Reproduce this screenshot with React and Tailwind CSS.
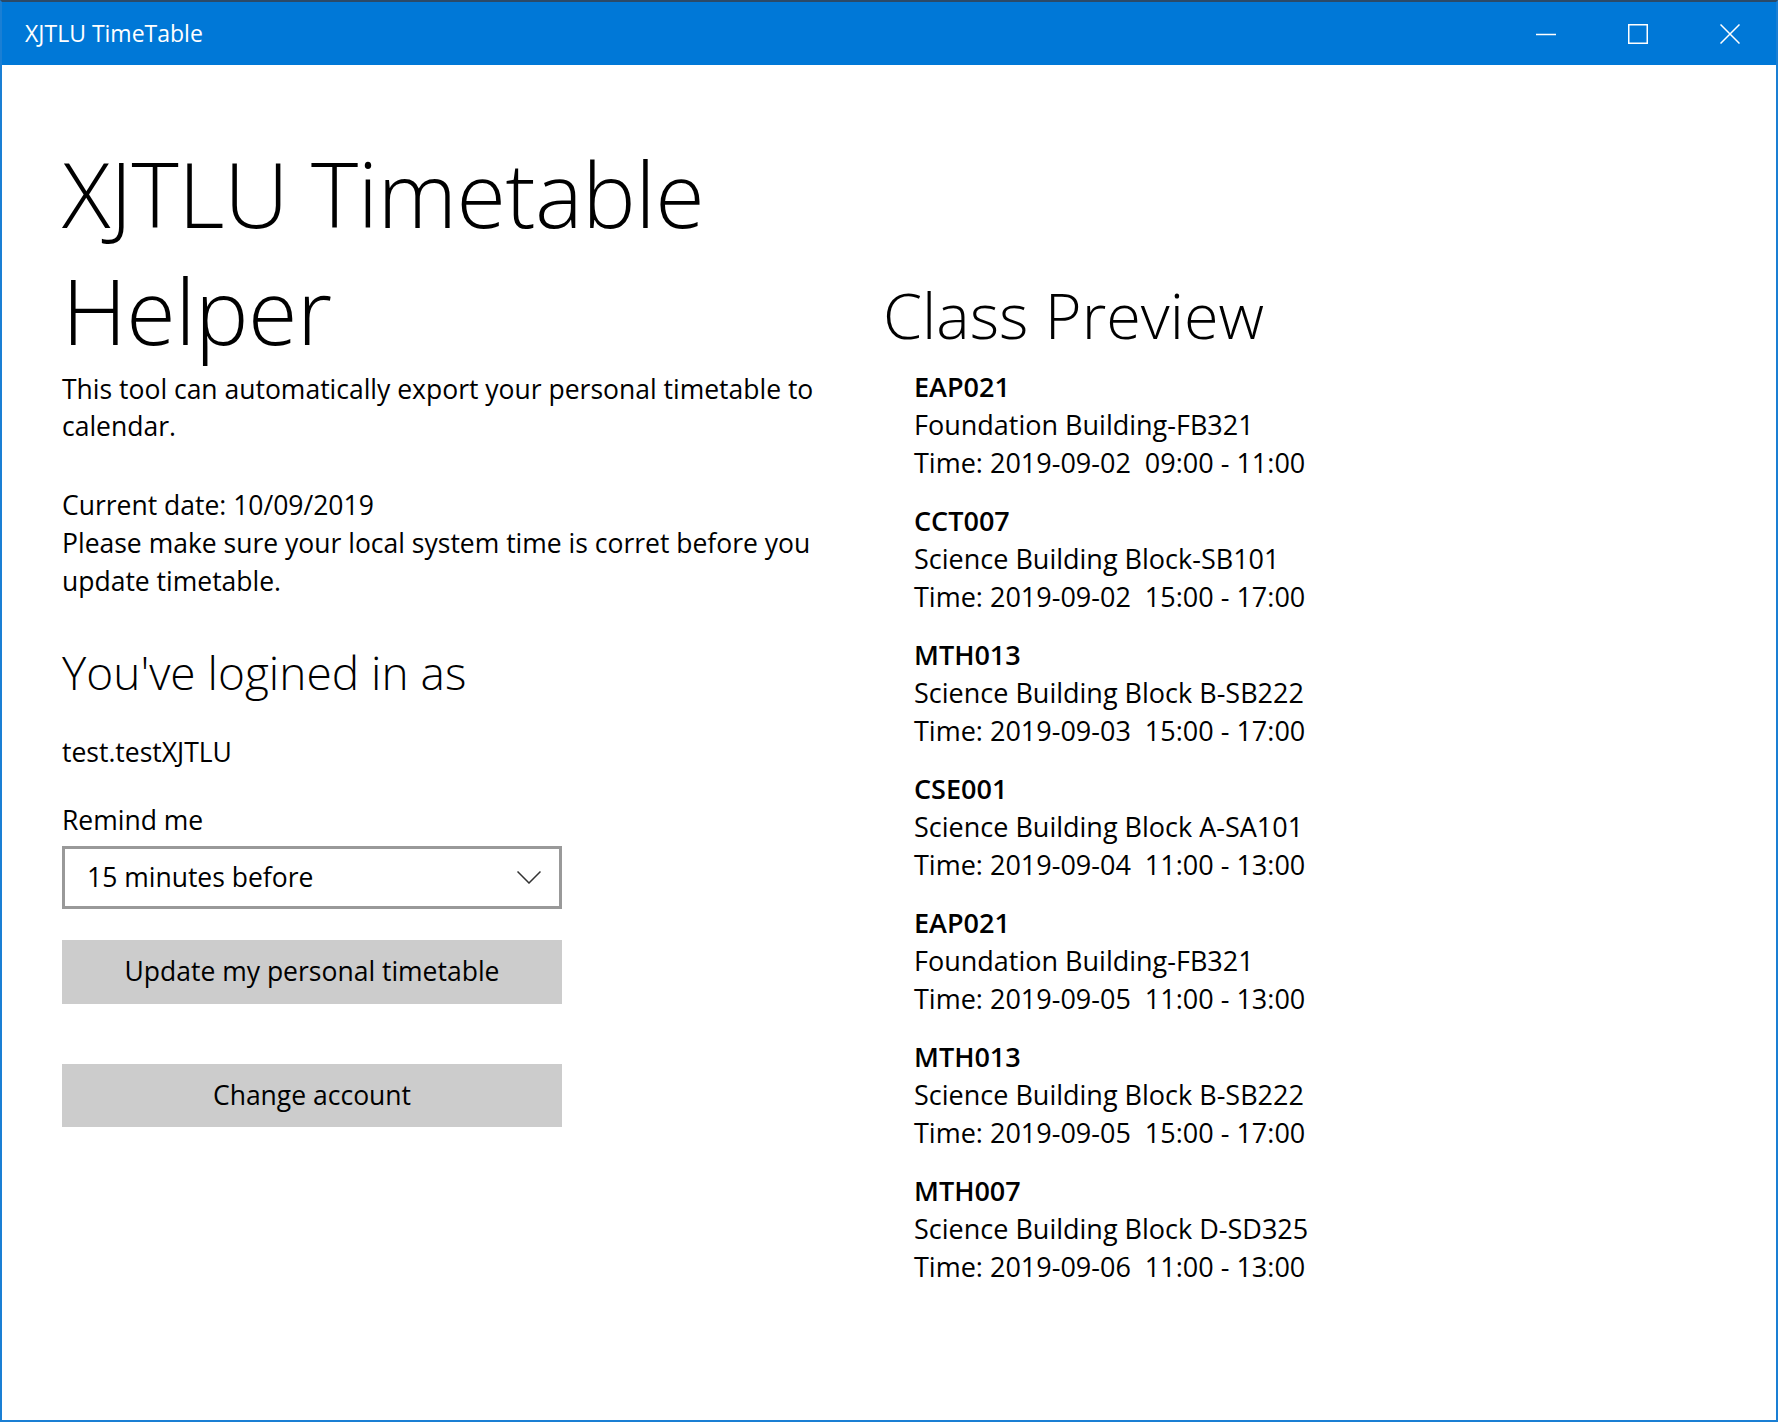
import React from 'react';

const classes = [
  { code: 'EAP021', room: 'Foundation Building-FB321', time: 'Time: 2019-09-02\u00a0\u00a009:00 - 11:00' },
  { code: 'CCT007', room: 'Science Building Block-SB101', time: 'Time: 2019-09-02\u00a0\u00a015:00 - 17:00' },
  { code: 'MTH013', room: 'Science Building Block B-SB222', time: 'Time: 2019-09-03\u00a0\u00a015:00 - 17:00' },
  { code: 'CSE001', room: 'Science Building Block A-SA101', time: 'Time: 2019-09-04\u00a0\u00a011:00 - 13:00' },
  { code: 'EAP021', room: 'Foundation Building-FB321', time: 'Time: 2019-09-05\u00a0\u00a011:00 - 13:00' },
  { code: 'MTH013', room: 'Science Building Block B-SB222', time: 'Time: 2019-09-05\u00a0\u00a015:00 - 17:00' },
  { code: 'MTH007', room: 'Science Building Block D-SD325', time: 'Time: 2019-09-06\u00a0\u00a011:00 - 13:00' },
];

function TitleBar() {
  return (
    <div className="h-[63px] bg-[#0078d7] flex items-center text-white shrink-0">
      <div className="pl-[23px] text-[23px] flex-1">XJTLU TimeTable</div>
      <div className="flex h-full">
        <div className="w-[92px] h-full flex items-center justify-center">
          <svg width="20" height="20" viewBox="0 0 20 20">
            <line x1="0" y1="10.5" x2="20" y2="10.5" stroke="white" strokeWidth="1.5" />
          </svg>
        </div>
        <div className="w-[92px] h-full flex items-center justify-center">
          <svg width="20" height="20" viewBox="0 0 20 20">
            <rect x="0.75" y="0.75" width="18.5" height="18.5" fill="none" stroke="white" strokeWidth="1.5" />
          </svg>
        </div>
        <div className="w-[92px] h-full flex items-center justify-center">
          <svg width="20" height="20" viewBox="0 0 20 20">
            <path d="M0.5 0.5 L19.5 19.5 M19.5 0.5 L0.5 19.5" stroke="white" strokeWidth="1.5" />
          </svg>
        </div>
      </div>
    </div>
  );
}

export default function App() {
  return (
    <div
      className="w-[1778px] h-[1422px] flex flex-col bg-white border-x-2 border-b-2 border-[#1a7fd4] border-t-2 border-t-[#2b4a68] text-black overflow-hidden"
      style={{ fontFamily: "'Open Sans', 'Noto Sans', sans-serif" }}
    >
      <TitleBar />
      <div className="flex flex-1">
        <div className="w-[881px] pl-[60px] shrink-0">
          <h1 className="mt-[70px] text-[90px] leading-[117px] font-light tracking-[-0.5px] whitespace-nowrap">
            XJTLU Timetable
            <br />
            Helper
          </h1>
          <p className="mt-[2px] text-[26.5px] leading-[37px] whitespace-nowrap">
            This tool can automatically export your personal timetable to
            <br />
            calendar.
          </p>
          <p className="mt-[41px] text-[26.5px] leading-[38px] whitespace-nowrap">
            Current date: 10/09/2019
            <br />
            Please make sure your local system time is corret before you
            <br />
            update timetable.
          </p>
          <h2 className="mt-[42px] text-[46px] leading-[60px] font-light">You've logined in as</h2>
          <div className="mt-[31px] text-[26.5px] leading-[38px]">test.testXJTLU</div>
          <div className="mt-[30px] text-[26.5px] leading-[38px]">Remind me</div>
          <div className="mt-[7px] w-[500px] h-[63px] border-[3px] border-[#999999] flex items-center justify-between pl-[22px] pr-[18px]">
            <span className="text-[26.5px]">15 minutes before</span>
            <svg width="24" height="13" viewBox="0 0 24 13">
              <path d="M0.5 0.5 L12 12 L23.5 0.5" fill="none" stroke="#333333" strokeWidth="1.5" />
            </svg>
          </div>
          <div className="mt-[31px] w-[500px] h-[64px] bg-[#cccccc] flex items-center justify-center text-[26.5px]">
            Update my personal timetable
          </div>
          <div className="mt-[60px] w-[500px] h-[63px] bg-[#cccccc] flex items-center justify-center text-[26.5px]">
            Change account
          </div>
        </div>
        <div className="flex-1">
          <h2 className="mt-[210px] text-[63px] leading-[80px] font-light">Class Preview</h2>
          <div className="mt-[13px] pl-[31px] flex flex-col gap-[20px]">
            {classes.map((c, i) => (
              <div key={i} className="text-[27px] leading-[38px] whitespace-nowrap">
                <div className="font-semibold">{c.code}</div>
                <div>{c.room}</div>
                <div>{c.time}</div>
              </div>
            ))}
          </div>
        </div>
      </div>
    </div>
  );
}
